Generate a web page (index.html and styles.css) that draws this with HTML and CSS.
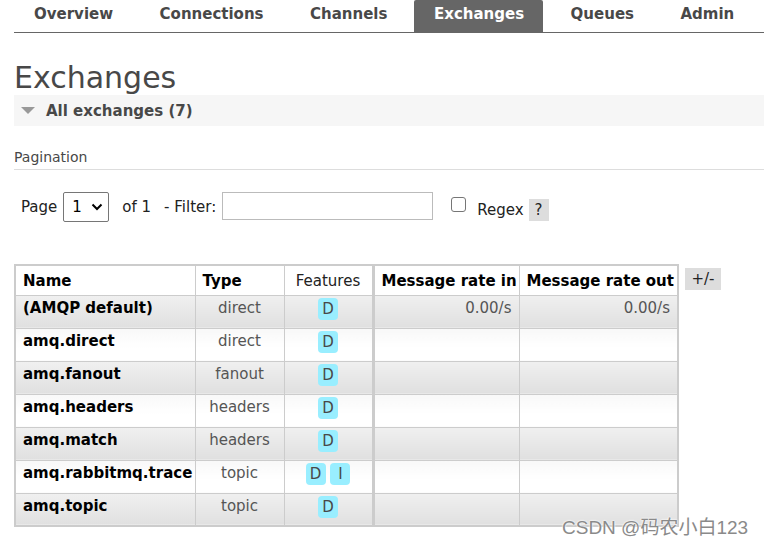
FILE: index.html
```html
<!DOCTYPE html>
<html>
<head>
<meta charset="utf-8">
<link rel="stylesheet" href="styles.css">
</head>
<body>
<nav class="tabs">
  <a class="tab">Overview</a>
  <a class="tab">Connections</a>
  <a class="tab">Channels</a>
  <a class="tab active">Exchanges</a>
  <a class="tab">Queues</a>
  <a class="tab">Admin</a>
</nav>
<main class="main">
  <h1 class="title">Exchanges</h1>
  <div class="section-bar"><span class="tri"></span><span class="section-title">All exchanges (7)</span></div>
  <div class="pag-head">Pagination</div>
  <div class="filter-row">
    <span class="lbl">Page</span>
    <span class="select"><span>1</span><svg width="12" height="8" viewBox="0 0 12 8"><path d="M1.5 1.5 L6 6 L10.5 1.5" fill="none" stroke="#000" stroke-width="2"/></svg></span>
    <span class="lbl of">of 1</span>
    <span class="lbl filt">- Filter:</span>
    <span class="input"></span>
    <span class="check"></span>
    <span class="lbl regex">Regex</span>
    <span class="help">?</span>
  </div>
  <div class="table-wrap">
    <table class="grid">
      <colgroup>
        <col class="c1"><col class="c2"><col class="c3"><col class="c4"><col class="c5">
      </colgroup>
      <thead>
        <tr>
          <th class="l">Name</th><th class="l">Type</th><th class="plain">Features</th><th class="sep">Message rate in</th><th>Message rate out</th>
        </tr>
      </thead>
      <tbody>
        <tr class="odd"><td class="name">(AMQP default)</td><td class="ctr">direct</td><td class="ctr"><span class="badge">D</span></td><td class="num sep">0.00/s</td><td class="num">0.00/s</td></tr>
        <tr class="even"><td class="name">amq.direct</td><td class="ctr">direct</td><td class="ctr"><span class="badge">D</span></td><td class="sep"></td><td></td></tr>
        <tr class="odd"><td class="name">amq.fanout</td><td class="ctr">fanout</td><td class="ctr"><span class="badge">D</span></td><td class="sep"></td><td></td></tr>
        <tr class="even"><td class="name">amq.headers</td><td class="ctr">headers</td><td class="ctr"><span class="badge">D</span></td><td class="sep"></td><td></td></tr>
        <tr class="odd"><td class="name">amq.match</td><td class="ctr">headers</td><td class="ctr"><span class="badge">D</span></td><td class="sep"></td><td></td></tr>
        <tr class="even"><td class="name">amq.rabbitmq.trace</td><td class="ctr">topic</td><td class="ctr"><span class="badge">D</span> <span class="badge">I</span></td><td class="sep"></td><td></td></tr>
        <tr class="odd"><td class="name">amq.topic</td><td class="ctr">topic</td><td class="ctr"><span class="badge">D</span></td><td class="sep"></td><td></td></tr>
      </tbody>
    </table>
    <span class="toggle">+/-</span>
  </div>
</main>
<div class="watermark">CSDN @码农小白123</div>
</body>
</html>
```
FILE: styles.css
```css
html, body {
  margin: 0;
  padding: 0;
  background: #fff;
  font-family: "DejaVu Sans", Verdana, sans-serif;
  font-size: 15px;
  color: #484848;
  overflow: hidden;
}
body {
  padding-left: 14px;
  position: relative;
  height: 544px;
}
.tabs {
  display: flex;
  height: 32px;
  border-bottom: 1px solid #666;
}
.tab {
  display: block;
  padding: 0 19px 0 20px;
  margin-right: 7.5px;
  line-height: 28px;
  font-weight: bold;
  font-size: 15px;
  color: #484848;
  border-radius: 2px 2px 0 0;
}
.tab.active {
  background: #666;
  color: #fff;
}
.title {
  margin: 28px 0 0;
  font-size: 30px;
  font-weight: normal;
  line-height: 34px;
  color: #484848;
}
.section-bar {
  display: flex;
  align-items: center;
  height: 31px;
  background: #f6f6f6;
}
.tri {
  width: 0;
  height: 0;
  margin-left: 7px;
  margin-right: 11px;
  border-left: 7px solid transparent;
  border-right: 7px solid transparent;
  border-top: 7px solid #999;
}
.section-title {
  font-weight: bold;
  font-size: 15px;
  color: #484848;
}
.pag-head {
  margin-top: 22px;
  font-size: 14px;
  line-height: 18px;
  padding-bottom: 3px;
  border-bottom: 1px solid #ddd;
  color: #484848;
}
.filter-row {
  display: flex;
  align-items: center;
  margin-top: 22px;
  padding-left: 7px;
  height: 30px;
}
.lbl {
  font-size: 15px;
  color: #222;
}
.select {
  display: flex;
  align-items: center;
  justify-content: space-between;
  box-sizing: border-box;
  width: 46px;
  height: 30px;
  margin-left: 6px;
  padding: 0 5px 0 8px;
  border: 1px solid #767676;
  border-radius: 2px;
  font-size: 15px;
  color: #000;
}
.of { margin-left: 13px; }
.filt { margin-left: 13px; }
.input {
  box-sizing: border-box;
  width: 211px;
  height: 28px;
  margin-left: 6px;
  margin-top: -2px;
  border: 1px solid #bbb;
}
.check {
  box-sizing: border-box;
  width: 15px;
  height: 15px;
  margin-left: 18px;
  margin-top: -6px;
  border: 1px solid #767676;
  border-radius: 3px;
}
.regex { margin-left: 11px; margin-top: 6px; }
.help {
  display: inline-block;
  width: 20px;
  height: 22px;
  margin-left: 5px;
  margin-top: 6px;
  background: #ddd;
  text-align: center;
  line-height: 22px;
  font-size: 15px;
  color: #222;
}
.table-wrap {
  display: flex;
  align-items: flex-start;
  margin-top: 42px;
}
.grid {
  border-collapse: collapse;
  table-layout: fixed;
  width: 663px;
  border: 2px solid #ccc;
}
.c1 { width: 180px; }
.c2 { width: 89px; }
.c3 { width: 89px; }
.c4 { width: 146px; }
.c5 { width: 159px; }
th, td {
  border: 1px solid #ccc;
  height: 33px;
  padding: 0 7px;
  font-size: 15px;
  white-space: nowrap;
  overflow: hidden;
}
th {
  height: 30px;
  box-sizing: border-box;
  padding-top: 2px;
  text-align: left;
  color: #000;
  background: #fff;
  font-weight: bold;
  vertical-align: middle;
}
th.plain { font-weight: normal; color: #222; text-align: center; }
th.l { text-align: left; }
.sep { border-left: 3px solid #ccc; }
td { vertical-align: top; padding-top: 3px; box-sizing: border-box; }
tr.odd td { background: linear-gradient(#f0f0f0, #e0e0e0); }
tr.even td { background: linear-gradient(#f8f8f8, #fff 60%); }
td.name { font-weight: bold; color: #000; }
td.ctr { text-align: center; color: #555; }
td.num { text-align: right; color: #555; }
.badge {
  display: inline-block;
  min-width: 20px;
  height: 22px;
  margin-top: -1px;
  line-height: 22px;
  padding: 0 2px;
  box-sizing: border-box;
  background: #99eeff;
  border-radius: 4px;
  text-align: center;
  color: #484848;
  font-size: 15px;
  vertical-align: top;
}
.toggle {
  display: inline-block;
  margin-left: 6px;
  margin-top: 4px;
  width: 36px;
  height: 22px;
  line-height: 22px;
  text-align: center;
  background: #ddd;
  font-size: 15px;
  color: #222;
}
.watermark {
  position: absolute;
  left: 562px;
  top: 512px;
  font-family: "Liberation Sans", "Noto Sans CJK SC", sans-serif;
  font-size: 19px;
  color: #8a8a8a;
  text-shadow: 0 0 2px #fff, 0 0 2px #fff;
}
```
